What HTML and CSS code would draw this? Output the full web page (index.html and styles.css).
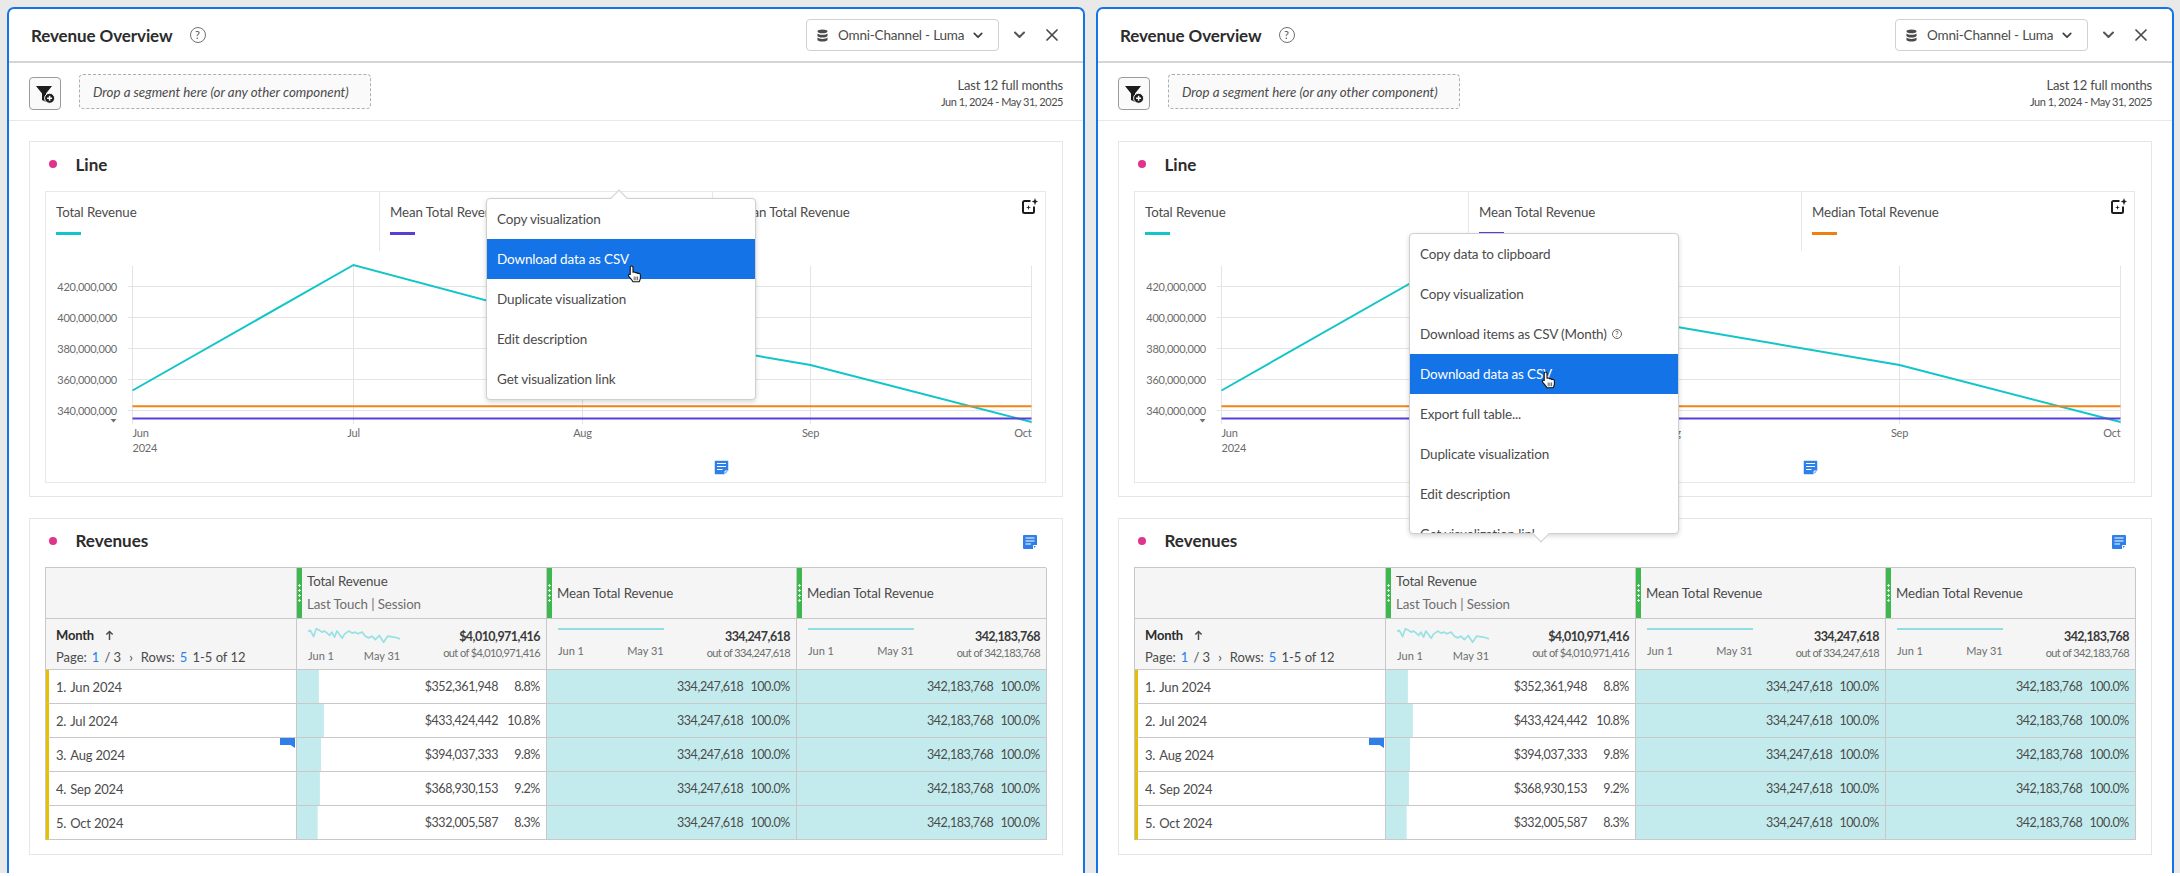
FILE: index.html
```html
<!DOCTYPE html>
<html lang="en">
<head>
<meta charset="utf-8">
<title>Revenue Overview</title>
<link rel="stylesheet" href="styles.css">
</head>
<body>
<svg class="defs" width="0" height="0" aria-hidden="true">
  <symbol id="i-db" viewBox="0 0 12 14"><path d="M6 .5c3 0 5.500.8 5.500 2S9 4.500 6 4.500.5 3.700.5 2.500 3 .5 6 .5zM.5 4.800C1.500 5.800 3.500 6.200 6 6.200s4.500-.4 5.500-1.400v2.500c0 1.200-2.500 2-5.500 2s-5.500-.8-5.500-2zM.5 9.300c1 1 3 1.400 5.500 1.400s4.500-.4 5.500-1.400v2.200c0 1.200-2.500 2-5.500 2s-5.500-.8-5.500-2z" fill="#4b4b4b"/></symbol>
  <symbol id="i-chev" viewBox="0 0 12 8"><path d="M1.500 1.500 6 6l4.500-4.500" fill="none" stroke="currentColor" stroke-width="2" stroke-linecap="round" stroke-linejoin="round"/></symbol>
  <symbol id="i-x" viewBox="0 0 12 12"><path d="M1 1l10 10M11 1 1 11" fill="none" stroke="#4b4b4b" stroke-width="1.700" stroke-linecap="round"/></symbol>
  <symbol id="i-filter" viewBox="0 0 20 20"><path d="M1 2H17L11 9.500V18L7 16V9.500z" fill="#1d1d1d"/><circle cx="14.600" cy="14.300" r="5" fill="#1d1d1d" stroke="#fafafa" stroke-width="1"/><path d="M14.600 11.800v5M12.100 14.300h5" stroke="#fff" stroke-width="1.500"/></symbol>
  <symbol id="i-ai" viewBox="0 0 16 16"><path d="M8.500 3H2.500A1.500 1.500 0 0 0 1 4.500v9A1.500 1.500 0 0 0 2.500 15h8a1.500 1.500 0 0 0 1.500-1.500V8.500" fill="none" stroke="#1d1d1d" stroke-width="2"/><path d="M13 0l.9 2.600 2.100.9-2.100.9-.9 3.100-.9-3.100-2.400-.9 2.400-.9zM6.500 7l.6 1.900 1.900.6-1.900.6-.6 1.900-.6-1.900-1.900-.6 1.900-.6z" fill="#1d1d1d"/></symbol>
  <symbol id="i-note" viewBox="0 0 14 14"><path d="M1 0h12a1 1 0 0 1 1 1v9l-4 4H1a1 1 0 0 1-1-1V1a1 1 0 0 1 1-1z" fill="#2f7fe8"/><path d="M2.500 3h9M2.500 6h9M2.500 9H8" stroke="#fff" stroke-width="1.200"/><path d="M10.500 14v-3.500H14" fill="none" stroke="#fff" stroke-width="1"/></symbol>
  <symbol id="i-hand" viewBox="0 0 16 18"><path d="M4.500 1C5.400 1 6 1.700 6 2.600V7.200C7 6.800 8 7 8.400 7.800 9.400 7.400 10.300 7.700 10.700 8.500 11.700 8.100 13.200 8.600 13.400 9.900V12.800C13.400 14.400 12.700 15.400 12.200 16.800H6C5 15 3.400 13.400 1.800 11.400 1 10.300 1.700 9 3 9.300L3.200 9.500V2.600C3.200 1.700 3.700 1 4.500 1Z" fill="#fff" stroke="#111" stroke-width="1.100" stroke-linejoin="round"/><path d="M7.200 11.500v3.800M8.900 11.500v3.800M10.600 11.500v3.800" stroke="#555" stroke-width=".9"/></symbol>
  <symbol id="i-spark" viewBox="55 185 278 50" preserveAspectRatio="none"><polyline points="55,198 62,195 72,213 80,190 88,194 97,200 105,197 113,203 120,210 127,200 135,215 142,197 150,207 158,218 165,206 178,197 188,203 197,200 205,205 218,200 228,212 238,217 248,212 258,222 270,210 283,230 295,212 310,214 320,216 333,220" fill="none" stroke="#97e0e3" stroke-width="5" stroke-linejoin="round"/></symbol>
</svg>

<main class="desk">

<section class="panel">
  <header class="phead">
    <h1 class="ptitle">Revenue Overview</h1>
    <span class="help">?</span>
    <div class="suite"><svg class="ic-db"><use href="#i-db"/></svg><span class="suite-name">Omni-Channel - Luma</span><svg class="ic-chev"><use href="#i-chev"/></svg></div>
    <svg class="ic-collapse"><use href="#i-chev"/></svg>
    <svg class="ic-x"><use href="#i-x"/></svg>
  </header>
  <div class="psub">
    <button class="fbtn"><svg class="ic-filter"><use href="#i-filter"/></svg></button>
    <div class="drop">Drop a segment here (or any other component)</div>
    <div class="range"><div class="range-a">Last 12 full months</div><div class="range-b">Jun 1, 2024 - May 31, 2025</div></div>
  </div>
  <div class="pbody">
    <article class="card card-line">
      <div class="chead"><i class="dot"></i><h2 class="ctitle">Line</h2></div>
      <div class="chart">
        <div class="legend">
          <div class="lg"><div class="lg-name">Total Revenue</div><i class="sw sw-teal"></i></div>
          <div class="lg"><div class="lg-name">Mean Total Revenue</div><i class="sw sw-purple"></i></div>
          <div class="lg"><div class="lg-name">Median Total Revenue</div><i class="sw sw-orange"></i><svg class="ic-ai"><use href="#i-ai"/></svg></div>
        </div>
        <svg class="plot" viewBox="46 251 999 231">
          <g class="grid">
            <path d="M128 286.500H1031.500M128 317.500H1031.500M128 348.500H1031.500M128 379.500H1031.500M128 410.500H1031.500"/>
            <path d="M132.500 266V424M353.500 266V424M582.500 266V424M810.500 266V424M1031.500 266V424"/>
          </g>
          <polyline class="l-teal" points="132.500,390.500 353.500,265 582.500,326 810.500,365 1031.500,422"/>
          <line class="l-orange" x1="132.500" y1="406.200" x2="1031.500" y2="406.200"/>
          <line class="l-purple" x1="132.500" y1="418.500" x2="1031.500" y2="418.500"/>
          <polygon class="tri" points="110.500,419 116.500,419 113.500,422.500"/>
          <g class="ax ax-y">
            <text x="117" y="290.500">420,000,000</text>
            <text x="117" y="321.500">400,000,000</text>
            <text x="117" y="352.500">380,000,000</text>
            <text x="117" y="383.500">360,000,000</text>
            <text x="117" y="414.500">340,000,000</text>
          </g>
          <g class="ax">
            <text x="132.500" y="437">Jun</text>
            <text x="132.500" y="452">2024</text>
            <text class="mid" x="353.500" y="437">Jul</text>
            <text class="mid" x="582.500" y="437">Aug</text>
            <text class="mid" x="810.500" y="437">Sep</text>
            <text class="end" x="1031.500" y="437">Oct</text>
          </g>
          <use href="#i-note" x="714.500" y="460.500" width="14" height="14"/>
        </svg>
      </div>
    </article>
    <article class="card card-table">
      <div class="chead"><i class="dot"></i><h2 class="ctitle">Revenues</h2><svg class="ic-note"><use href="#i-note"/></svg></div>
      <div class="tbl">
        <div class="c h0"></div>
        <div class="c h1"><i class="grip"></i><div class="h-txt"><div>Total Revenue</div><div class="h-sub">Last Touch | Session</div></div></div>
        <div class="c h1"><i class="grip"></i><div class="h-txt"><div>Mean Total Revenue</div></div></div>
        <div class="c h1"><i class="grip"></i><div class="h-txt"><div>Median Total Revenue</div></div></div>

        <div class="c s0"><div class="dim">Month <svg class="ic-up" viewBox="0 0 10 12"><path d="M5 11V2M1.500 5 5 1.500 8.500 5" fill="none" stroke="#4b4b4b" stroke-width="1.600"/></svg></div><div class="pager"><span>Page:</span><b>1</b><span>/ 3</span><span class="nx">›</span><span>Rows:</span><b>5</b><span>1-5 of 12</span></div></div>
        <div class="c s1"><div class="sp"><svg class="spark"><use href="#i-spark"/></svg><div class="sp-d"><span>Jun 1</span><span>May 31</span></div></div><div class="sum"><div class="sum-a">$4,010,971,416</div><div class="sum-b">out of $4,010,971,416</div></div></div>
        <div class="c s1"><div class="sp"><i class="flat"></i><div class="sp-d"><span>Jun 1</span><span>May 31</span></div></div><div class="sum"><div class="sum-a">334,247,618</div><div class="sum-b">out of 334,247,618</div></div></div>
        <div class="c s1"><div class="sp"><i class="flat"></i><div class="sp-d"><span>Jun 1</span><span>May 31</span></div></div><div class="sum"><div class="sum-a">342,183,768</div><div class="sum-b">out of 342,183,768</div></div></div>

        <div class="c r0"><span class="rk">1.</span>Jun 2024</div>
        <div class="c v bar" style="background-size:8.8% 100%"><span>$352,361,948</span><span class="pct">8.8%</span></div>
        <div class="c v full"><span>334,247,618</span><span class="pct">100.0%</span></div>
        <div class="c v full"><span>342,183,768</span><span class="pct">100.0%</span></div>

        <div class="c r0"><span class="rk">2.</span>Jul 2024</div>
        <div class="c v bar" style="background-size:10.8% 100%"><span>$433,424,442</span><span class="pct">10.8%</span></div>
        <div class="c v full"><span>334,247,618</span><span class="pct">100.0%</span></div>
        <div class="c v full"><span>342,183,768</span><span class="pct">100.0%</span></div>

        <div class="c r0"><span class="rk">3.</span>Aug 2024<i class="flag"></i></div>
        <div class="c v bar" style="background-size:9.8% 100%"><span>$394,037,333</span><span class="pct">9.8%</span></div>
        <div class="c v full"><span>334,247,618</span><span class="pct">100.0%</span></div>
        <div class="c v full"><span>342,183,768</span><span class="pct">100.0%</span></div>

        <div class="c r0"><span class="rk">4.</span>Sep 2024</div>
        <div class="c v bar" style="background-size:9.2% 100%"><span>$368,930,153</span><span class="pct">9.2%</span></div>
        <div class="c v full"><span>334,247,618</span><span class="pct">100.0%</span></div>
        <div class="c v full"><span>342,183,768</span><span class="pct">100.0%</span></div>

        <div class="c r0"><span class="rk">5.</span>Oct 2024</div>
        <div class="c v bar" style="background-size:8.3% 100%"><span>$332,005,587</span><span class="pct">8.3%</span></div>
        <div class="c v full"><span>334,247,618</span><span class="pct">100.0%</span></div>
        <div class="c v full"><span>342,183,768</span><span class="pct">100.0%</span></div>
      </div>
    </article>
  </div>
  <div class="menu menu-a">
    <i class="arrow arrow-up"></i>
    <ul class="mlist">
      <li>Copy visualization</li>
      <li class="on">Download data as CSV</li>
      <li>Duplicate visualization</li>
      <li>Edit description</li>
      <li>Get visualization link</li>
    </ul>
    <svg class="hand"><use href="#i-hand"/></svg>
  </div>
</section>

<section class="panel">
  <header class="phead">
    <h1 class="ptitle">Revenue Overview</h1>
    <span class="help">?</span>
    <div class="suite"><svg class="ic-db"><use href="#i-db"/></svg><span class="suite-name">Omni-Channel - Luma</span><svg class="ic-chev"><use href="#i-chev"/></svg></div>
    <svg class="ic-collapse"><use href="#i-chev"/></svg>
    <svg class="ic-x"><use href="#i-x"/></svg>
  </header>
  <div class="psub">
    <button class="fbtn"><svg class="ic-filter"><use href="#i-filter"/></svg></button>
    <div class="drop">Drop a segment here (or any other component)</div>
    <div class="range"><div class="range-a">Last 12 full months</div><div class="range-b">Jun 1, 2024 - May 31, 2025</div></div>
  </div>
  <div class="pbody">
    <article class="card card-line">
      <div class="chead"><i class="dot"></i><h2 class="ctitle">Line</h2></div>
      <div class="chart">
        <div class="legend">
          <div class="lg"><div class="lg-name">Total Revenue</div><i class="sw sw-teal"></i></div>
          <div class="lg"><div class="lg-name">Mean Total Revenue</div><i class="sw sw-purple"></i></div>
          <div class="lg"><div class="lg-name">Median Total Revenue</div><i class="sw sw-orange"></i><svg class="ic-ai"><use href="#i-ai"/></svg></div>
        </div>
        <svg class="plot" viewBox="46 251 999 231">
          <g class="grid">
            <path d="M128 286.500H1031.500M128 317.500H1031.500M128 348.500H1031.500M128 379.500H1031.500M128 410.500H1031.500"/>
            <path d="M132.500 266V424M353.500 266V424M582.500 266V424M810.500 266V424M1031.500 266V424"/>
          </g>
          <polyline class="l-teal" points="132.500,390.500 353.500,265 582.500,326 810.500,365 1031.500,422"/>
          <line class="l-orange" x1="132.500" y1="406.200" x2="1031.500" y2="406.200"/>
          <line class="l-purple" x1="132.500" y1="418.500" x2="1031.500" y2="418.500"/>
          <polygon class="tri" points="110.500,419 116.500,419 113.500,422.500"/>
          <g class="ax ax-y">
            <text x="117" y="290.500">420,000,000</text>
            <text x="117" y="321.500">400,000,000</text>
            <text x="117" y="352.500">380,000,000</text>
            <text x="117" y="383.500">360,000,000</text>
            <text x="117" y="414.500">340,000,000</text>
          </g>
          <g class="ax">
            <text x="132.500" y="437">Jun</text>
            <text x="132.500" y="452">2024</text>
            <text class="mid" x="353.500" y="437">Jul</text>
            <text class="mid" x="582.500" y="437">Aug</text>
            <text class="mid" x="810.500" y="437">Sep</text>
            <text class="end" x="1031.500" y="437">Oct</text>
          </g>
          <use href="#i-note" x="714.500" y="460.500" width="14" height="14"/>
        </svg>
      </div>
    </article>
    <article class="card card-table">
      <div class="chead"><i class="dot"></i><h2 class="ctitle">Revenues</h2><svg class="ic-note"><use href="#i-note"/></svg></div>
      <div class="tbl">
        <div class="c h0"></div>
        <div class="c h1"><i class="grip"></i><div class="h-txt"><div>Total Revenue</div><div class="h-sub">Last Touch | Session</div></div></div>
        <div class="c h1"><i class="grip"></i><div class="h-txt"><div>Mean Total Revenue</div></div></div>
        <div class="c h1"><i class="grip"></i><div class="h-txt"><div>Median Total Revenue</div></div></div>

        <div class="c s0"><div class="dim">Month <svg class="ic-up" viewBox="0 0 10 12"><path d="M5 11V2M1.500 5 5 1.500 8.500 5" fill="none" stroke="#4b4b4b" stroke-width="1.600"/></svg></div><div class="pager"><span>Page:</span><b>1</b><span>/ 3</span><span class="nx">›</span><span>Rows:</span><b>5</b><span>1-5 of 12</span></div></div>
        <div class="c s1"><div class="sp"><svg class="spark"><use href="#i-spark"/></svg><div class="sp-d"><span>Jun 1</span><span>May 31</span></div></div><div class="sum"><div class="sum-a">$4,010,971,416</div><div class="sum-b">out of $4,010,971,416</div></div></div>
        <div class="c s1"><div class="sp"><i class="flat"></i><div class="sp-d"><span>Jun 1</span><span>May 31</span></div></div><div class="sum"><div class="sum-a">334,247,618</div><div class="sum-b">out of 334,247,618</div></div></div>
        <div class="c s1"><div class="sp"><i class="flat"></i><div class="sp-d"><span>Jun 1</span><span>May 31</span></div></div><div class="sum"><div class="sum-a">342,183,768</div><div class="sum-b">out of 342,183,768</div></div></div>

        <div class="c r0"><span class="rk">1.</span>Jun 2024</div>
        <div class="c v bar" style="background-size:8.8% 100%"><span>$352,361,948</span><span class="pct">8.8%</span></div>
        <div class="c v full"><span>334,247,618</span><span class="pct">100.0%</span></div>
        <div class="c v full"><span>342,183,768</span><span class="pct">100.0%</span></div>

        <div class="c r0"><span class="rk">2.</span>Jul 2024</div>
        <div class="c v bar" style="background-size:10.8% 100%"><span>$433,424,442</span><span class="pct">10.8%</span></div>
        <div class="c v full"><span>334,247,618</span><span class="pct">100.0%</span></div>
        <div class="c v full"><span>342,183,768</span><span class="pct">100.0%</span></div>

        <div class="c r0"><span class="rk">3.</span>Aug 2024<i class="flag"></i></div>
        <div class="c v bar" style="background-size:9.8% 100%"><span>$394,037,333</span><span class="pct">9.8%</span></div>
        <div class="c v full"><span>334,247,618</span><span class="pct">100.0%</span></div>
        <div class="c v full"><span>342,183,768</span><span class="pct">100.0%</span></div>

        <div class="c r0"><span class="rk">4.</span>Sep 2024</div>
        <div class="c v bar" style="background-size:9.2% 100%"><span>$368,930,153</span><span class="pct">9.2%</span></div>
        <div class="c v full"><span>334,247,618</span><span class="pct">100.0%</span></div>
        <div class="c v full"><span>342,183,768</span><span class="pct">100.0%</span></div>

        <div class="c r0"><span class="rk">5.</span>Oct 2024</div>
        <div class="c v bar" style="background-size:8.3% 100%"><span>$332,005,587</span><span class="pct">8.3%</span></div>
        <div class="c v full"><span>334,247,618</span><span class="pct">100.0%</span></div>
        <div class="c v full"><span>342,183,768</span><span class="pct">100.0%</span></div>
      </div>
    </article>
  </div>
  <div class="menu menu-b">
    <ul class="mlist">
      <li>Copy data to clipboard</li>
      <li>Copy visualization</li>
      <li>Download items as CSV (Month)<span class="minfo">?</span></li>
      <li class="on">Download data as CSV</li>
      <li>Export full table...</li>
      <li>Duplicate visualization</li>
      <li>Edit description</li>
      <li>Get visualization link</li>
    </ul>
    <i class="arrow arrow-down"></i>
    <svg class="hand"><use href="#i-hand"/></svg>
  </div>
</section>

</main>
</body>
</html>
```
FILE: styles.css
```css
* { box-sizing: border-box; }
html, body { margin: 0; padding: 0; background: #fff; }
body { font-family: Lato, "Open Sans", sans-serif; color: #4b4b4b; font-size: 13px; overflow: hidden; }
.defs { position: absolute; }
h1, h2, ul { margin: 0; padding: 0; }
.desk { display: flex; gap: 11px; height: 873px; padding: 7px 6px 0 7px; background: #e9e9e9; }
.panel { position: relative; width: 1078px; flex: none; background: #fff; border: 2px solid #1473e6; border-bottom: 0; border-radius: 7px 7px 0 0; overflow: hidden; }

.phead { display: flex; align-items: center; height: 54px; padding: 0 0 0 22px; border-bottom: 2px solid #d5d5d5; }
.ptitle { font-size: 17px; font-weight: 700; color: #2c2c2c; letter-spacing: -.1px; }
.help { width: 16px; height: 16px; margin-left: 17px; border: 1px solid #707070; border-radius: 50%; font-size: 11px; line-height: 14px; text-align: center; color: #555; }
.suite { display: flex; align-items: center; height: 32px; width: 193px; margin-left: auto; padding: 0 0 0 10px; border: 1px solid #d0d0d0; border-radius: 4px; }
.ic-db { width: 11px; height: 13px; flex: none; }
.suite-name { margin-left: 10px; width: 126px; font-size: 13.500px; white-space: nowrap; letter-spacing: -.2px; }
.ic-chev { width: 10px; height: 7px; margin-left: 9px; color: #3c3c3c; flex: none; }
.ic-collapse { width: 13px; height: 8px; margin-left: 14px; color: #555; }
.ic-x { width: 12px; height: 12px; margin-left: 20px; margin-right: 25px; }

.psub { display: flex; align-items: flex-start; height: 58px; padding: 11px 20px 0 20px; border-bottom: 1px solid #e8e8e8; }
.fbtn { width: 32px; height: 33px; margin-top: 3px; padding: 0; background: #fafafa; border: 1px solid #9a9a9a; border-radius: 4px; display: flex; align-items: center; justify-content: center; }
.ic-filter { width: 20px; height: 20px; }
.drop { width: 292px; height: 35px; margin-left: 18px; padding-left: 13px; line-height: 34px; background: #fafafa; border: 1px dashed #aeaeae; border-radius: 4px; font-style: italic; font-size: 13.300px; white-space: nowrap; }
.range { margin-left: auto; text-align: right; margin-top: 2px; }
.range-a { font-size: 13px; line-height: 18px; letter-spacing: -.2px; }
.range-b { font-size: 11px; line-height: 16px; letter-spacing: -.45px; }

.pbody { padding: 20px; display: flex; flex-direction: column; gap: 21px; }
.card { border: 1px solid #e6e6e6; padding: 0 16px 0 15px; }
.card-line { height: 356px; }
.card-table { height: 337px; }
.chead { display: flex; align-items: center; height: 48px; padding-bottom: 5px; }
.card-line .chead { height: 49px; }
.dot { width: 8px; height: 8px; margin-left: 3.500px; border-radius: 50%; background: #e0338c; }
.ctitle { margin-left: 19px; font-size: 17px; font-weight: 700; color: #2c2c2c; }
.ic-note { width: 14px; height: 14px; margin-left: auto; margin-top: 3px; margin-right: 9px; }

.chart { border: 1px solid #e8e8e8; height: 292px; }
.legend { display: grid; grid-template-columns: 334px 333px 1fr; height: 59px; }
.lg { position: relative; padding: 11px 0 0 10px; border-right: 1px solid #e8e8e8; }
.lg:last-child { border-right: 0; }
.lg-name { font-size: 13.300px; line-height: 18px; letter-spacing: -.1px; }
.sw { display: block; width: 25px; height: 3px; margin-top: 11px; }
.sw-teal { background: #12c5c8; }
.sw-purple { background: #5a3fd6; }
.sw-orange { background: #ef7f12; }
.ic-ai { position: absolute; right: 7px; top: 6px; width: 16px; height: 16px; }
.plot { display: block; width: 999px; height: 231px; }
.grid path { fill: none; stroke: #e4e4e4; stroke-width: 1; }
.l-teal { fill: none; stroke: #12c5c8; stroke-width: 2; }
.l-orange { stroke: #f08516; stroke-width: 2; }
.l-purple { stroke: #5a3fd6; stroke-width: 2; }
.tri { fill: #707070; }
.ax text { font-size: 11px; letter-spacing: -.25px; fill: #6b6b6b; font-family: Lato, sans-serif; }
.ax-y text { text-anchor: end; }
.ax .mid { text-anchor: middle; }
.ax .end { text-anchor: end; }

.tbl { display: grid; grid-template-columns: 251px 250px 250px 250px; grid-template-rows: 51px 51px repeat(5, 34px); border-top: 1px solid #c8c8c8; border-left: 1px solid #c8c8c8; }
.c { position: relative; border-right: 1px solid #c8c8c8; border-bottom: 1px solid #c8c8c8; min-width: 0; }
.h0, .h1, .s0, .s1 { background: #f5f5f5; }
.h1 { display: flex; align-items: center; }
.grip { flex: none; align-self: stretch; width: 5px; display: flex; align-items: center; background: #3db84f; }
.grip::before { content: ""; display: block; width: 5px; height: 20px; background: radial-gradient(circle at center, #dff5e2 1px, transparent 1.400px) center top / 5px 5px repeat-y; }
.h-txt { padding-left: 5px; font-size: 13.300px; letter-spacing: -.1px; }
.h-txt > div { line-height: 23px; }
.h-sub { color: #6e6e6e; }
.s0 { padding: 8px 0 0 10px; }
.dim { display: flex; align-items: center; gap: 11px; font-weight: 700; color: #2c2c2c; font-size: 13px; line-height: 17px; letter-spacing: -.2px; }
.ic-up { width: 9px; height: 11px; }
.pager { display: flex; gap: 5px; margin-top: 4px; font-size: 13px; line-height: 18px; white-space: nowrap; }
.pager b { font-weight: 400; color: #2680eb; }
.pager .nx { margin: 0 3px; }
.s1 { display: flex; padding: 0 6px 0 11px; }
.sp { flex: 1; min-width: 0; margin-right: 43px; padding-top: 8px; }
.spark { display: block; width: 100%; height: 17px; }
.flat { display: block; height: 2px; margin-top: 1px; margin-bottom: 14px; background: #8fdfe2; }
.sp-d { display: flex; justify-content: space-between; margin-top: 5px; font-size: 11px; line-height: 14px; color: #6e6e6e; }
.sum { flex: none; text-align: right; padding-top: 10px; white-space: nowrap; }
.sum-a { font-weight: 700; font-size: 12.500px; line-height: 16px; color: #3a3a3a; letter-spacing: -.55px; }
.sum-b { font-size: 11px; line-height: 15px; color: #6e6e6e; letter-spacing: -.6px; }
.r0 { display: flex; align-items: center; padding-left: 7px; border-left: 3px solid #e6bf00; font-size: 13px; letter-spacing: -.2px; }
.rk { margin-right: 4px; }
.v { display: flex; align-items: center; justify-content: flex-end; padding-right: 6px; font-size: 12.500px; letter-spacing: -.4px; }
.pct { min-width: 42px; padding-left: 7px; text-align: right; }
.bar { background: linear-gradient(#c3ebed, #c3ebed) no-repeat left top; }
.full { background: #c3ebed; }
.flag { position: absolute; right: 1px; top: 0; width: 15px; height: 10px; background: #2f7fe8; clip-path: polygon(0 0, 100% 0, 100% 100%, 70% 70%, 0 70%); }

.menu { position: absolute; width: 270px; }
.menu-a { left: 477px; top: 189px; }
.menu-b { left: 311px; top: 224px; }
.mlist { list-style: none; position: relative; background: #fff; border: 1px solid #cfcfcf; border-radius: 4px; box-shadow: 0 2px 5px rgba(0,0,0,.16); overflow: hidden; }
.menu-b .mlist { height: 301px; }
.mlist li { display: flex; align-items: center; height: 40px; padding-left: 10px; font-size: 13.500px; letter-spacing: -.15px; white-space: nowrap; }
.mlist li.on { background: #1473e6; color: #fff; }
.minfo { width: 10px; height: 10px; margin-left: 5px; border: 1px solid #666; border-radius: 50%; font-size: 7px; line-height: 8px; text-align: center; letter-spacing: 0; }
.arrow { position: absolute; width: 12px; height: 12px; background: #fff; transform: rotate(45deg); }
.arrow-up { left: 127px; top: -6px; border-left: 1px solid #cfcfcf; border-top: 1px solid #cfcfcf; z-index: 1; }
.arrow-down { left: 126px; top: 295px; border-right: 1px solid #cfcfcf; border-bottom: 1px solid #cfcfcf; }
.hand { position: absolute; width: 16px; height: 18px; z-index: 2; }
.menu-a .hand { left: 141px; top: 67px; }
.menu-b .hand { left: 132px; top: 138px; }
```
